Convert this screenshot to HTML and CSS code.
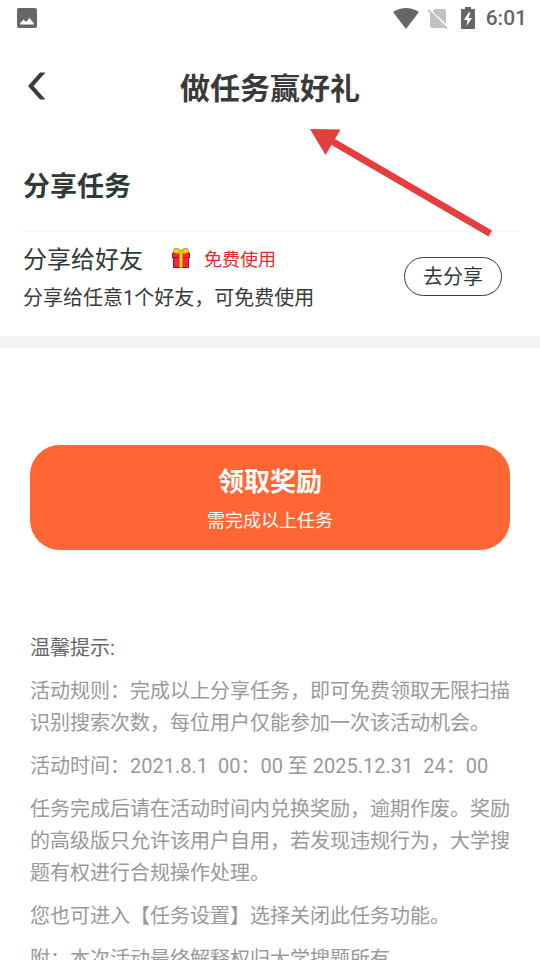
FILE: index.html
```html
<!DOCTYPE html>
<html lang="zh-CN">
<head>
<meta charset="utf-8">
<meta name="viewport" content="width=device-width, initial-scale=1">
<title>做任务赢好礼</title>
<link rel="stylesheet" href="styles.css">
</head>
<body>
<div class="app">
  <div class="status">
    <svg width="20" height="20" viewBox="0 0 20 20" aria-hidden="true"><rect width="20" height="20" rx="2" fill="#666"/><path d="M3 16.500V15.500L6.500 11.500L9 14L12.500 10L17 15.500V16.500Z" fill="#fff"/></svg>
    <div class="status-right">
      <svg width="26" height="21" viewBox="0 0 26 21" aria-hidden="true"><path d="M0 4Q13-4 26 4L13 21Z" fill="#666"/></svg>
      <svg class="sim" width="20" height="21" viewBox="0 0 20 21" aria-hidden="true"><path d="M7 1H16Q18 1 18 3V16L4.500 3.500ZM2 4L17 20H4Q2 20 2 18Z" fill="#c2c2c2"/><path d="M0 2L19 20.500" stroke="#c2c2c2" stroke-width="2"/></svg>
      <svg class="battery" width="14" height="22" viewBox="0 0 14 22" aria-hidden="true"><path d="M0 2H4V0H10V2H14V22H0Z" fill="#666"/><path d="M7.500 5.500L3 13H6.500L5.500 19L11 11H7.500L9.500 5.500Z" fill="#fff"/></svg>
      <span class="clock">6:01</span>
    </div>
  </div>
  <header class="header">
    <button class="back" type="button" aria-label="返回"><svg width="18" height="28" viewBox="0 0 18 28" aria-hidden="true"><path d="M12 0.500H17.500L5.500 14L17.500 27.500H12L0 14Z" fill="#3a3a3a"/></svg></button>
    <h1 class="title">做任务赢好礼</h1>
  </header>
  <section class="tasks">
    <h2 class="section-title">分享任务</h2>
    <div class="task">
      <div class="task-info">
        <div class="task-head">
          <h3 class="task-name">分享给好友</h3>
          <svg class="gift" width="20" height="22" viewBox="0 0 20 22" aria-hidden="true">
            <path d="M1.500 6H18.500V11H17.500V20.500H2.500V11H1.500Z" fill="#fb2440" stroke="#8f1820"/>
            <path d="M2 10.500H18" stroke="#a71526"/>
            <path d="M8.500 5H11.500V20.500H8.500Z" fill="#ffe600" stroke="#b98100" stroke-width=".6"/>
            <path d="M9.500 5.500Q3.500 6.500 3 4Q3.500 1 6 2Q8.500 2.500 9.500 5.500ZM10.500 5.500Q16.500 6.500 17 4Q16.500 1 14 2Q11.500 2.500 10.500 5.500Z" fill="#fff6df" stroke="#9b7600" stroke-width="2"/>
            <path d="M9.500 5.500Q3.500 6.500 3 4Q3.500 1 6 2Q8.500 2.500 9.500 5.500ZM10.500 5.500Q16.500 6.500 17 4Q16.500 1 14 2Q11.500 2.500 10.500 5.500Z" fill="none" stroke="#ffe100" stroke-width="1.200"/>
          </svg>
          <span class="tag">免费使用</span>
        </div>
        <p class="task-desc">分享给任意1个好友，可免费使用</p>
      </div>
      <button class="share" type="button">去分享</button>
    </div>
    <svg class="arrow" width="184" height="110" viewBox="0 0 184 110" aria-hidden="true"><path d="M0 1L30.500 1.500L25 11L182 102.500L178.500 108.500L21.500 17L15.500 27Z" fill="#e43e3e"/></svg>
  </section>
  <button class="reward" type="button"><strong class="reward-title">领取奖励</strong><span class="reward-note">需完成以上任务</span></button>
  <section class="tips">
    <h2 class="tips-title">温馨提示:</h2>
    <p>活动规则：完成以上分享任务，即可免费领取无限扫描识别搜索次数，每位用户仅能参加一次该活动机会。</p>
    <p>活动时间：2021.8.1  00：00 至 2025.12.31  24：00</p>
    <p>任务完成后请在活动时间内兑换奖励，逾期作废。奖励的高级版只允许该用户自用，若发现违规行为，大学搜题有权进行合规操作处理。</p>
    <p>您也可进入【任务设置】选择关闭此任务功能。</p>
    <p>附：本次活动最终解释权归大学搜题所有</p>
  </section>
</div>
</body>
</html>
```
FILE: styles.css
```css
* { box-sizing: border-box; }

body {
  margin: 0;
  background: #fff;
  color: #3a3a3a;
  font-family: Roboto, "Noto Sans CJK SC", sans-serif;
}

h1, h2, h3, p { margin: 0; }

button {
  margin: 0;
  padding: 0;
  border: 0;
  background: none;
  font-family: inherit;
  cursor: pointer;
}

svg { display: block; flex: none; }

.app {
  display: flex;
  flex-direction: column;
  height: 100vh;
  overflow: hidden;
}

.app > * { flex: none; }

.status {
  display: flex;
  align-items: center;
  justify-content: space-between;
  height: 36px;
  padding: 0 13px 0 17px;
}

.status-right { display: flex; align-items: center; }
.sim { margin-left: 9px; }
.battery { margin-left: 13px; }

.clock {
  margin-left: 11px;
  color: #666;
  font-size: 21px;
  font-weight: 500;
  line-height: 38px;
}

.header {
  display: grid;
  grid-template-columns: 48px 1fr 48px;
  align-items: center;
  height: 100px;
  padding: 0 12px;
}

.back {
  display: flex;
  align-items: center;
  height: 48px;
  padding-left: 16px;
}

.title {
  padding-top: 6px;
  font-size: 30px;
  font-weight: 700;
  line-height: 44px;
  text-align: center;
}

.tasks {
  position: relative;
  border-bottom: 12px solid #f4f4f4;
}

.section-title {
  margin: 0 23px;
  padding: 31px 0 23px;
  border-bottom: 2px solid #f7f7f7;
  color: #303a38;
  font-size: 27px;
  font-weight: 700;
  line-height: 40px;
}

.task {
  display: flex;
  align-items: flex-start;
  justify-content: space-between;
  padding: 10px 38px 22px 23px;
}

.task-head { display: flex; align-items: center; height: 36px; }

.task-name {
  color: #303a38;
  font-size: 24px;
  font-weight: 400;
  line-height: 36px;
}

.gift { margin: 0 13px 4px 28px; }
.tag { color: #e02a2a; font-size: 18px; line-height: 36px; }
.task-desc { padding-top: 4px; font-size: 20px; line-height: 32px; }

.share {
  width: 98px;
  height: 39px;
  margin-top: 15px;
  padding-bottom: 2px;
  border: 1px solid #3a3a3a;
  border-radius: 20px;
  color: #303a38;
  font-size: 20px;
}

.arrow {
  position: absolute;
  top: -8px;
  right: 46px;
}

.reward {
  display: flex;
  flex-direction: column;
  align-items: center;
  margin: 97px 30px 82px;
  padding: 16px 0 11px;
  border-radius: 30px;
  background: #ff6633;
  color: #fff;
}

.reward-title { font-size: 26px; font-weight: 700; line-height: 42px; }
.reward-note { font-size: 18px; line-height: 36px; }

.tips {
  display: flex;
  flex-direction: column;
  gap: 11px;
  padding: 0 30px;
  color: #999;
  font-size: 20px;
  line-height: 32px;
  white-space: pre-wrap;
}

.tips-title {
  color: #666;
  font-size: 20px;
  font-weight: 400;
  line-height: 32px;
}
```
